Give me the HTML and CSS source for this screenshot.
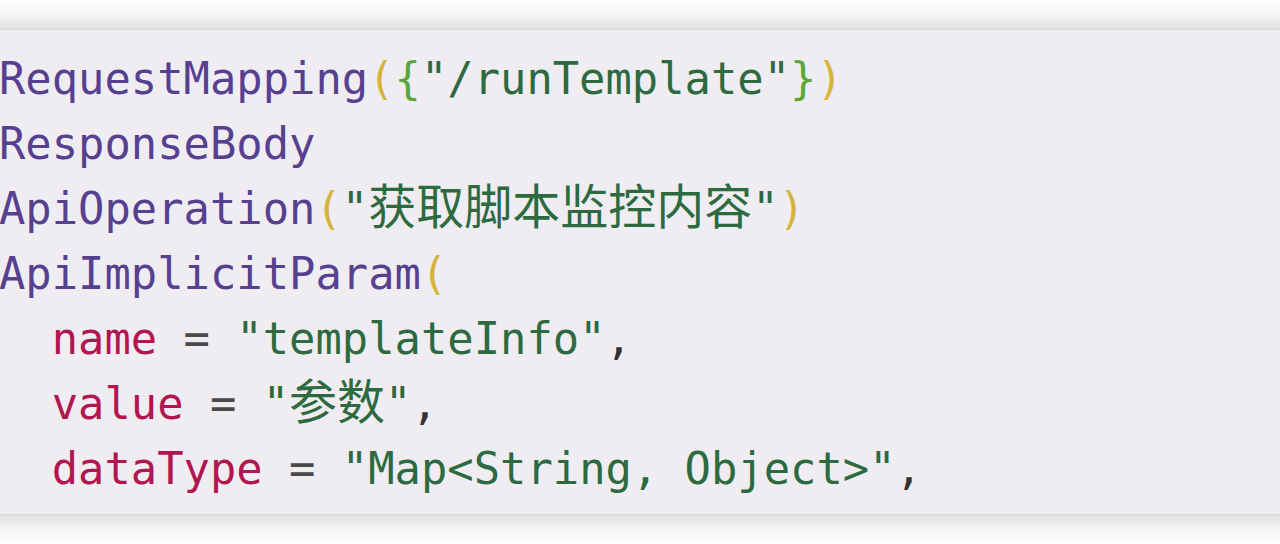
FILE: index.html
```html
<!DOCTYPE html>
<html lang="zh-CN">
<head>
<meta charset="utf-8">
<title>Code</title>
<link rel="stylesheet" href="styles.css">
</head>
<body>
<div class="page">
  <pre class="code"><span class="line"><span class="ann">RequestMapping</span><span class="p1">(</span><span class="p2">{</span><span class="str">"/runTemplate"</span><span class="p2">}</span><span class="p1">)</span></span>
<span class="line"><span class="ann">ResponseBody</span></span>
<span class="line"><span class="ann">ApiOperation</span><span class="p1">(</span><span class="str">"<span class="cjk">获取脚本监控内容</span>"</span><span class="p1">)</span></span>
<span class="line"><span class="ann">ApiImplicitParam</span><span class="p1">(</span></span>
<span class="line">  <span class="key">name</span> <span class="op">=</span> <span class="str">"templateInfo"</span><span class="pun">,</span></span>
<span class="line">  <span class="key">value</span> <span class="op">=</span> <span class="str">"<span class="cjk">参数</span>"</span><span class="pun">,</span></span>
<span class="line">  <span class="key">dataType</span> <span class="op">=</span> <span class="str">"Map&lt;String, Object&gt;"</span><span class="pun">,</span></span></pre>
</div>
</body>
</html>
```
FILE: styles.css
```css
html, body {
  margin: 0;
  padding: 0;
  background: #ffffff;
  overflow: hidden;
}
.page {
  width: 1280px;
  height: 544px;
  padding-top: 29px;
  box-sizing: border-box;
  overflow: hidden;
}
.code {
  margin: 0 -40px;
  padding: 16px 40px 15px 39px;
  height: 486px;
  box-sizing: border-box;
  background: #efedf2;
  box-shadow: 0 0 30px rgba(0, 0, 0, 0.24);
  border-top: 1px solid #d8d7dc;
  border-bottom: 1px solid #d8d7dc;
  font-family: "DejaVu Sans Mono", "Noto Sans CJK SC", monospace;
  font-size: 43.8px;
  line-height: 65px;
  color: #333;
  white-space: pre;
}
.ann { color: #56408f; }
.p1 { color: #d6b43c; }
.p2 { color: #5aa83c; }
.str { color: #2d6a3f; }
.key { color: #b11650; }
.op { color: #4a4a4a; }
.pun { color: #333333; }
.cjk {
  font-family: "Noto Sans CJK SC", sans-serif;
  font-size: 48px;
  line-height: 30px;
}
```
